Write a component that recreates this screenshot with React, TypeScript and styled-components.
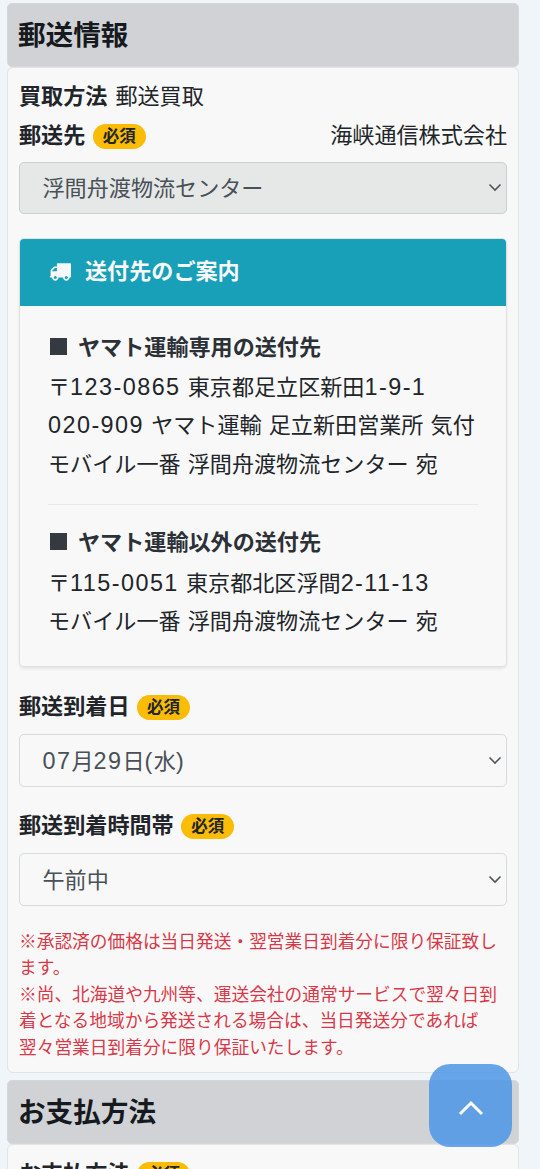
import React from 'react';
import styled, { createGlobalStyle } from 'styled-components';

const GlobalStyle = createGlobalStyle`
  * { box-sizing: border-box; }
  html, body { margin: 0; padding: 0; height: 100%; overflow: hidden; }
  body {
    background: #eff5f8;
    color: #212529;
    font-family: "Noto Sans CJK JP", sans-serif;
    font-size: 22.1px;
    line-height: 38.8px;
  }
`;

const Page = styled.main`
  width: 540px;
  height: 1169px;
  overflow: hidden;
  padding: 3px 20px 0 7px;
`;

const Section = styled.section`
  width: 512px;
  margin-bottom: 7px;
`;

const SectionTitle = styled.h2`
  margin: 0;
  height: 64px;
  padding: 0 10px;
  border: 1px solid #d5d7da;
  border-radius: 5px;
  background: #d0d2d6;
  color: #16191d;
  font-size: 27.6px;
  font-weight: 700;
  line-height: 59px;
`;

const SectionBody = styled.div<{ $height: number }>`
  height: ${(p) => p.$height}px;
  padding: 6.5px 11px 0;
  border: 1.5px solid #e1e3e5;
  border-radius: 6px;
  background: #f8f8f8;
`;

const Row = styled.div<{ $top?: number }>`
  display: flex;
  align-items: center;
  height: 39px;
  margin-top: ${(p) => p.$top ?? 0}px;
  white-space: nowrap;
`;

const Label = styled.span`
  font-weight: 700;
`;

const RowValue = styled.span<{ $end?: boolean }>`
  margin-left: ${(p) => (p.$end ? 'auto' : '8px')};
`;

const Badge = styled.span`
  width: 53px;
  height: 25px;
  margin: 6px 0 0 7.5px;
  border-radius: 13px;
  background: #fabc06;
  font-size: 16.5px;
  font-weight: 700;
  line-height: 23.5px;
  text-align: center;
`;

const SelectBox = styled.div<{ $disabled?: boolean; $top?: number }>`
  display: flex;
  align-items: center;
  justify-content: space-between;
  height: 52.5px;
  margin-top: ${(p) => p.$top ?? 10}px;
  padding: 0 4px 2px 22.5px;
  border: 1.5px solid ${(p) => (p.$disabled ? '#c9cfd7' : '#d5dbdf')};
  border-radius: 5px;
  background: ${(p) => (p.$disabled ? '#e6e8e8' : '#f8f8f8')};
  color: #495057;
  white-space: nowrap;

  svg { margin-top: 2px; }
`;

const Num = styled.span`
  font-family: "Liberation Sans", Arial, sans-serif;
  font-size: 23.4px;
  letter-spacing: 1.45px;
  line-height: 1;
`;

const InfoCard = styled.div`
  height: 429px;
  margin-top: 23.5px;
  border: 1px solid #dfe1e2;
  border-radius: 5px;
  overflow: hidden;
  box-shadow: 0 2px 3px rgba(0, 0, 0, 0.08);
`;

const InfoHeader = styled.div`
  display: flex;
  align-items: center;
  gap: 14.5px;
  height: 67px;
  padding: 0 28.5px 1px;
  background: #17a0b8;
  color: #f8f8f8;
  font-weight: 700;
`;

const InfoTitle = styled.span`
  margin-top: -4px;
`;

const InfoBody = styled.div`
  padding: 20px 28px 0 28px;
`;

const Address = styled.div`
  height: 38.8px;
  white-space: nowrap;
  word-spacing: 2.2px;
`;

const AddressTitle = styled.div`
  display: flex;
  align-items: center;
  gap: 11px;
  height: 39px;
  padding-left: 2px;
  margin-bottom: 1.2px;
  color: #2b3137;
  font-weight: 700;
`;

const Square = styled.i`
  width: 17px;
  height: 17px;
  margin-top: 2px;
  background: #343a40;
`;

const Divider = styled.hr`
  height: 1px;
  margin: 22.3px 0 16px;
  border: 0;
  background: #e9eaeb;
`;

const Notes = styled.div`
  margin-top: 21px;
  color: #d93848;
  font-size: 17.72px;
  line-height: 26.6px;
  white-space: nowrap;
`;

const TopButton = styled.button`
  position: fixed;
  left: 429px;
  top: 1064px;
  display: flex;
  align-items: center;
  justify-content: center;
  width: 83px;
  height: 83px;
  padding: 4px 0 0;
  border: 0;
  border-radius: 21px;
  background: rgba(75, 149, 230, 0.84);
`;

const Chevron = () => (
  <svg width="14" height="9" viewBox="0 0 14 9" fill="none">
    <path d="M1.5 1.5 7 7 12.5 1.5" stroke="#4f555b" strokeWidth="1.6" />
  </svg>
);

const Truck = () => (
  <svg width="22" height="18" viewBox="0 256 1792 1408" fill="currentColor">
    <path d="M640 1408q0-52-38-90t-90-38-90 38-38 90 38 90 90 38 90-38 38-90zm-384-512h384v-256h-158q-13 0-22 9l-195 195q-9 9-9 22v30zm1280 512q0-52-38-90t-90-38-90 38-38 90 38 90 90 38 90-38 38-90zm256-1088v1024q0 15-4 26.5t-13.5 18.5-16.5 11.500-23.5 6-22.5 2-25.5 0-22.5-.5q0 106-75 181t-181 75-181-75-75-181h-384q0 106-75 181t-181 75-181-75-75-181h-64q-3 0-22.5.5t-25.5 0-22.5-2-23.5-6-16.5-11.5-13.5-18.5-4-26.5q0-26 19-45t45-19v-320q0-8-.5-35t0-38 2.5-34.5 6.5-37 14-30.500 22.5-30l198-198q19-19 50.5-32t58.5-13h160v-192q0-26 19-45t45-19h1024q26 0 45 19t19 45z" />
  </svg>
);

export default function App() {
  return (
    <>
      <GlobalStyle />
      <Page>
        <Section>
          <SectionTitle>郵送情報</SectionTitle>
          <SectionBody $height={1006}>
            <Row>
              <Label>買取方法</Label>
              <RowValue>郵送買取</RowValue>
            </Row>
            <Row>
              <Label>郵送先</Label>
              <Badge>必須</Badge>
              <RowValue $end>海峡通信株式会社</RowValue>
            </Row>
            <SelectBox $disabled $top={9}>
              浮間舟渡物流センター
              <Chevron />
            </SelectBox>
            <InfoCard>
              <InfoHeader>
                <Truck />
                <InfoTitle>送付先のご案内</InfoTitle>
              </InfoHeader>
              <InfoBody>
                <AddressTitle><Square />ヤマト運輸専用の送付先</AddressTitle>
                <Address>〒<Num>123-0865</Num> 東京都足立区新田<Num>1-9-1</Num></Address>
                <Address><Num>020-909</Num> ヤマト運輸 足立新田営業所 気付</Address>
                <Address>モバイル一番 浮間舟渡物流センター 宛</Address>
                <Divider />
                <AddressTitle><Square />ヤマト運輸以外の送付先</AddressTitle>
                <Address>〒<Num>115-0051</Num> 東京都北区浮間<Num>2-11-13</Num></Address>
                <Address>モバイル一番 浮間舟渡物流センター 宛</Address>
              </InfoBody>
            </InfoCard>
            <Row $top={18.5}>
              <Label>郵送到着日</Label>
              <Badge>必須</Badge>
            </Row>
            <SelectBox>
              <span><Num>07</Num>月<Num>29</Num>日<Num>(</Num>水<Num>)</Num></span>
              <Chevron />
            </SelectBox>
            <Row $top={17.5}>
              <Label>郵送到着時間帯</Label>
              <Badge>必須</Badge>
            </Row>
            <SelectBox>
              午前中
              <Chevron />
            </SelectBox>
            <Notes>
              ※承認済の価格は当日発送・翌営業日到着分に限り保証致し<br />
              ます。<br />
              ※尚、北海道や九州等、運送会社の通常サービスで翌々日到<br />
              着となる地域から発送される場合は、当日発送分であれば<br />
              翌々営業日到着分に限り保証いたします。
            </Notes>
          </SectionBody>
        </Section>
        <Section>
          <SectionTitle>お支払方法</SectionTitle>
          <SectionBody $height={200}>
            <Row>
              <Label>お支払方法</Label>
              <Badge>必須</Badge>
            </Row>
          </SectionBody>
        </Section>
      </Page>
      <TopButton aria-label="ページの先頭へ">
        <svg width="26" height="16" viewBox="0 0 26 16" fill="none">
          <path d="M2 14 13 3 24 14" stroke="#fff" strokeWidth="3" />
        </svg>
      </TopButton>
    </>
  );
}
